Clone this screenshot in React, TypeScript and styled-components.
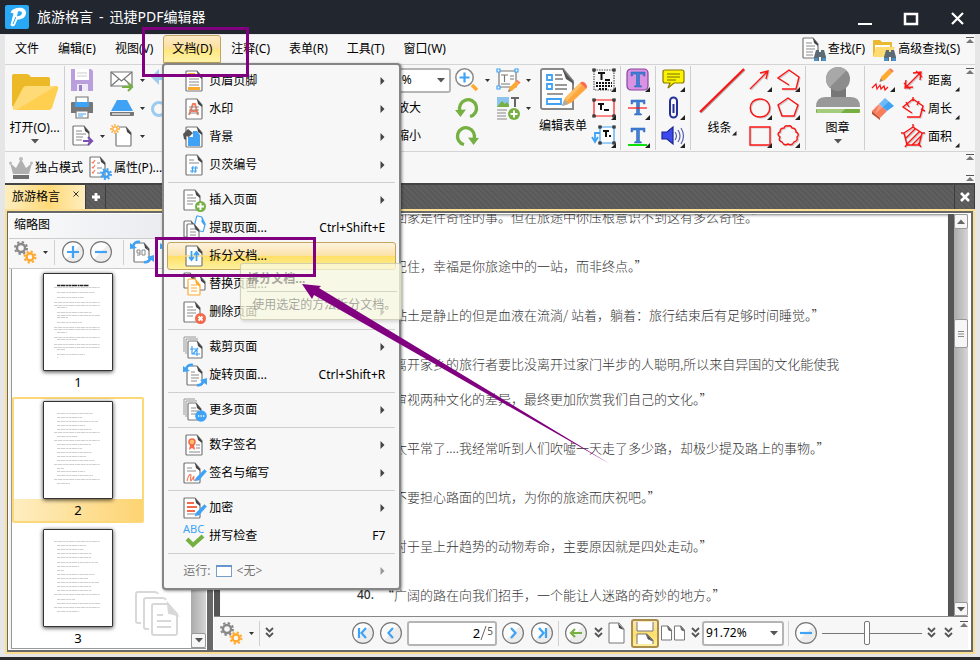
import React from "react";
import styled, { createGlobalStyle, css } from "styled-components";

const ui = `"Noto Sans", "Noto Sans CJK SC", sans-serif`;
const BLUE = "#3fa2f5";
const GREEN = "#76b043";
const GRAY = "#777";
const RED = "#fb1414";
const ORANGE = "#ffa92e";

const Global = createGlobalStyle`
  * { box-sizing: border-box; }
  body { margin: 0; background: #222; font: 12px/16px ${ui}; color: #000; overflow: hidden; }
  button, input, select { font: inherit; color: inherit; }
  button { border: 0; padding: 0; background: none; text-align: left; white-space: nowrap; }
  svg { display: block; flex: none; overflow: visible; }
`;

/* ---------- window frame ---------- */
const Window = styled.div`
  position: relative;
  display: flex;
  flex-direction: column;
  height: 100vh;
  min-height: 480px;
`;
const TitleBar = styled.header`
  display: flex;
  align-items: center;
  gap: 8px;
  height: 34px;
  flex: none;
  padding: 0 15px 0 5px;
  background: #22262f;
  color: #fff;
`;
const Title = styled.h1`
  flex: 1;
  display: flex;
  gap: 6px;
  margin: 0;
  font-size: 14px;
  font-weight: 400;
  line-height: 20px;
`;
const WindowButtons = styled.div`
  display: flex;
  gap: 30px;
  padding-top: 3px;
`;
const Frame = styled.div`
  flex: 1;
  min-height: 0;
  display: flex;
  flex-direction: column;
  padding: 1px 5px 3px;
  background: #e6e6e6;
  border-bottom: 3px solid #2a2a2a;
`;

/* ---------- bars ---------- */
const MenuBar = styled.nav`
  display: flex;
  gap: 1px;
  height: 30px;
  flex: none;
  padding-left: 1px;
  background: #f7f7f7;
  border-bottom: 1px solid #d4d4d4;
`;
const MenuSlot = styled.div`
  position: relative;
  display: flex;
`;
const MenuTab = styled.button<{ $open?: boolean }>`
  height: 28px;
  padding: 0 9px;
  ${(p) =>
    p.$open &&
    css`
      padding: 0 8px;
      border: 1px solid #c3a560;
      border-radius: 3px 3px 0 0;
      background: linear-gradient(#fdebc6, #fbdf9d 48%, #ffe680 52%, #fff3a8);
    `}
`;
const Spacer = styled.div`
  flex: 1;
`;
const SearchButton = styled.button`
  display: flex;
  align-items: center;
  gap: 2px;
  height: 28px;
  margin: 0 1px 0 5px;
`;
const Grips = styled.div`
  display: flex;
  flex-direction: column;
  justify-content: space-between;
  width: 13px;
  padding: 2px 0 2px 4px;
`;
const ModeGrips = styled(Grips)`
  height: 31px;
`;
const Ribbon = styled.div`
  display: flex;
  height: 87px;
  flex: none;
  padding-top: 1px;
  background: #f7f7f7;
  border-bottom: 1px solid #d4d4d4;
`;
const Group = styled.div<{ $line?: boolean; $pad?: number }>`
  display: flex;
  flex: none;
  height: 84px;
  padding-left: ${(p) => p.$pad ?? 5}px;
  border-right: 1px solid ${(p) => (p.$line ? "#cfcfcf" : "transparent")};
`;
const Column = styled.div<{ $w: number }>`
  width: ${(p) => p.$w}px;
  display: grid;
  grid-template-rows: repeat(3, 28px);
  align-items: center;
`;
const IconButton = styled.button`
  display: flex;
  align-items: center;
  gap: 6px;
`;
const LargeButton = styled.button<{ $w: number }>`
  width: ${(p) => p.$w}px;
  display: flex;
  flex-direction: column;
  align-items: center;
  padding-top: 1px;
`;
const LargeLabel = styled.span`
  display: flex;
  align-items: flex-end;
  height: 20px;
  margin: 3px 0;
`;
const ZoomLabel = styled.button`
  padding-left: 30px;
`;
const MeasureButton = styled.button`
  display: flex;
  align-items: flex-end;
  line-height: 22px;
  gap: 3px;
`;
const ModeBar = styled.div`
  display: flex;
  align-items: center;
  gap: 5px;
  height: 31px;
  flex: none;
  padding-left: 4px;
  background: #f7f7f7;
`;
const ModeButton = styled.button`
  display: flex;
  align-items: center;
  gap: 2px;
`;

/* ---------- combo ---------- */
const ComboBox = styled.div<{ $w: number }>`
  position: relative;
  width: ${(p) => p.$w}px;
  height: 25px;
  display: flex;
  align-items: center;
  background: #fff;
  border: 2px solid #b5b5b5;
  border-radius: 3px;
  padding-right: 4px;
`;
const ComboSelect = styled.select`
  flex: 1;
  min-width: 0;
  appearance: none;
  border: 0;
  background: none;
  padding: 0 0 0 2px;
`;

/* ---------- menu ---------- */
const Menu = styled.div`
  position: absolute;
  z-index: 5;
  left: -1px;
  top: 28px;
  width: 239px;
  padding: 2px 3px 3px;
  background: #f7f7f7;
  border: 2px solid #858585;
  border-radius: 4px;
  box-shadow: 1px 1px 3px rgba(0, 0, 0, 0.45);
`;
const MenuItem = styled.button<{ $hot?: boolean; $dim?: boolean }>`
  display: flex;
  align-items: center;
  gap: 2px;
  width: 100%;
  height: 28px;
  padding: 0 10px 0 15px;
  border: 1px solid transparent;
  border-radius: 3px;
  color: ${(p) => (p.$dim ? "#777" : "#000")};
  ${(p) =>
    p.$hot &&
    css`
      border-color: #c3a560;
      background: linear-gradient(#fdf3df, #fbe2a8 48%, #ffe066 52%, #fff1a0);
    `}
`;
const MenuText = styled.span`
  flex: 1;
`;
const MenuRule = styled.hr`
  height: 1px;
  margin: 3px 1px;
  border: 0;
  background: #cfcfcf;
`;
const ItemWrap = styled.div`
  position: relative;
`;
const Tooltip = styled.div`
  position: absolute;
  z-index: 2;
  left: 73px;
  top: 21px;
  width: 162px;
  height: 57px;
  padding: 7px 4px 0 6px;
  border: 1px solid rgba(150, 150, 120, 0.4);
  border-radius: 3px;
  background: rgba(248, 248, 224, 0.75);
  box-shadow: 1px 2px 3px rgba(0, 0, 0, 0.12);
  color: rgba(110, 110, 110, 0.6);
  white-space: nowrap;
`;
const TooltipTitle = styled.div`
  font-weight: 700;
  padding-bottom: 4px;
  border-bottom: 1px solid rgba(150, 150, 130, 0.35);
  margin-bottom: 5px;
`;
const TooltipText = styled.div`
  padding-left: 5px;
`;

/* ---------- tabs & workspace ---------- */
const TabBar = styled.div`
  display: flex;
  align-items: stretch;
  height: 26px;
  flex: none;
  background: #5b5b5b repeating-linear-gradient(45deg, #595959 0 2px, #5f5f5f 2px 4px);
  border-top: 2px solid #444;
`;
const DocTab = styled.div`
  display: flex;
  align-items: center;
  gap: 13px;
  width: 80px;
  padding-left: 7px;
  background: linear-gradient(90deg, #fdeebf, #ffd978 55%, #fdeebf);
`;
const TabTool = styled.button`
  width: 21px;
  display: grid;
  place-items: center;
  border: 0 solid #3c3c3c;
  border-width: 0 1px;
`;
const Workspace = styled.main`
  flex: 1;
  min-height: 0;
  display: flex;
  gap: 6px;
  padding: 2px;
  border: 2px solid #fade91;
  background: #686868;
`;
const Panel = styled.section`
  width: 199px;
  flex: none;
  display: flex;
  flex-direction: column;
  margin-left: -1px;
  border: 1px solid #fff;
  background: #f4f4f4;
`;
const PanelTitle = styled.h2`
  margin: 0;
  height: 24px;
  padding: 3px 5px;
  font-size: 12px;
  line-height: 16px;
  font-weight: 400;
  background: linear-gradient(90deg, #fafafa, #e6e8ee);
`;
const PanelTools = styled.div`
  display: flex;
  align-items: center;
  gap: 6px;
  height: 31px;
  padding: 0 0 3px 4px;
  overflow: hidden;
  background: #f7f7f7;
  border: 1px solid #ccc;
  border-width: 1px 0;
`;
const ThumbZoom = styled.div`
  display: flex;
  gap: 4px;
  margin-right: 4px;
`;
const Bar = styled.span`
  width: 1px;
  height: 25px;
  flex: none;
  background: #d0d0d0;
`;
const ThumbArea = styled.div`
  flex: 1;
  min-height: 0;
  display: flex;
  margin-left: 2px;
  background: #fff;
  border-left: 1px solid #999;
  border-bottom: 1px solid #999;
`;
const ThumbList = styled.div`
  position: relative;
  flex: 1;
  overflow: hidden;
`;
const Thumb = styled.button<{ $on?: boolean }>`
  display: flex;
  flex-direction: column;
  align-items: center;
  width: 132px;
  height: 126px;
  margin-bottom: 2px;
  border: 2px solid ${(p) => (p.$on ? "#fdd878" : "transparent")};
  border-radius: 2px;
  padding-top: 2px;
  background: ${(p) => (p.$on ? "linear-gradient(90deg, #feedc0, #fdd472) bottom / 100% 22px no-repeat" : "none")};
`;
const Sheet = styled.span`
  width: 70px;
  height: 98px;
  border: 1px solid #333;
  border-radius: 1px;
  background: #fff;
  box-shadow: 0 1px 4px rgba(0, 0, 0, 0.75);
`;
const ThumbNumber = styled.span`
  padding-top: 3px;
  font-size: 13px;
  line-height: 17px;
`;
const Watermark = styled.div`
  position: absolute;
  right: 12px;
  bottom: 11px;
`;
const Scroll = styled.div<{ $w: number }>`
  width: ${(p) => p.$w}px;
  display: flex;
  flex-direction: column;
  background: linear-gradient(90deg, #aaa, #d6d6d6);
`;
const ScrollButton = styled.button<{ $h: number }>`
  display: grid;
  place-items: center;
  height: ${(p) => p.$h}px;
  border: 1px solid #999;
  border-radius: 2px;
  background: #f6f6f6;
`;
const ScrollGap = styled.div<{ $grow: number }>`
  flex: ${(p) => p.$grow};
`;

const Viewer = styled.section`
  flex: 1;
  min-width: 0;
  display: flex;
  flex-direction: column;
  border: 1px solid #fff;
  border-right-width: 3px;
`;
const PageRow = styled.div`
  flex: 1;
  min-height: 0;
  display: flex;
  background: #555;
  padding-left: 6px;
`;
const Page = styled.article`
  flex: 1;
  overflow: hidden;
  display: flex;
  flex-direction: column;
  justify-content: flex-end;
  margin-right: 6px;
  padding: 0 0 4px 137px;
  background: #fff;
  box-shadow: inset 0 3px 3px -2px #777;
`;
const Quotes = styled.ol`
  margin: 0;
  padding: 0;
  list-style: none;
`;
const Quote = styled.li`
  display: flex;
  margin-top: 14px;
  font: 300 13px/35px "Noto Sans CJK SC", sans-serif;
  color: #333;
  white-space: nowrap;
`;
const QuoteNumber = styled.span`
  width: 24px;
  font: 500 12px/35px ${ui};
`;
const StatusBar = styled.footer`
  display: flex;
  align-items: center;
  height: 33px;
  flex: none;
  padding-left: 5px;
  background: #f7f7f7;
  border-top: 1px solid #888;
`;
const StatusCell = styled.div<{ $w: number; $end?: boolean; $indent?: boolean }>`
  width: ${(p) => p.$w}px;
  flex: none;
  display: flex;
  align-items: center;
  gap: 6px;
  padding-left: ${(p) => (p.$indent ? 5 : 0)}px;
  justify-content: ${(p) => (p.$end ? "flex-end" : "flex-start")};
`;
const SliderEnd = styled.div`
  display: flex;
  flex: 1;
  justify-content: space-between;
  padding: 0 7px 0 5px;
`;
const StatusGrip = styled.span`
  padding-bottom: 18px;
`;
const PageField = styled.label`
  display: flex;
  align-items: center;
  width: 90px;
  height: 25px;
  padding-right: 2px;
  background: #fff;
  border: 2px solid #b5b5b5;
  border-radius: 3px;
`;
const PageInput = styled.input`
  flex: 1;
  min-width: 0;
  padding: 0;
  border: 0;
  background: none;
  font-size: 13px;
  text-align: right;
  outline: 0;
`;
const PageTotal = styled.span`
  font-size: 10px;
  line-height: 12px;
  padding-bottom: 4px;
  color: #555;
`;
const Toggle = styled.button`
  width: 28px;
  height: 29px;
  display: grid;
  place-items: center;
  border: 2px solid #a98e4c;
  border-radius: 3px;
  background: linear-gradient(#fbe6b8, #ffdf6a 55%, #fff0a0);
`;
const Slider = styled.input`
  appearance: none;
  width: 100px;
  height: 24px;
  margin: 0;
  background: linear-gradient(#777, #777) center / 100% 1px no-repeat;
  &::-webkit-slider-thumb {
    appearance: none;
    width: 6px;
    height: 24px;
    border: 1px solid #777;
    border-radius: 2px;
    background: #fff;
  }
`;

/* ---------- callouts ---------- */
const Callout = styled.div<{ $x: number; $y: number; $w: number; $h: number }>`
  position: absolute;
  z-index: 10;
  left: ${(p) => p.$x}px;
  top: ${(p) => p.$y}px;
  width: ${(p) => p.$w}px;
  height: ${(p) => p.$h}px;
  border: 3px solid #800080;
  pointer-events: none;
`;
const Pointer = styled.svg`
  position: absolute;
  z-index: 10;
  left: 302px;
  top: 284px;
  pointer-events: none;
`;

/* ---------- icons ---------- */
type Kids = { children?: React.ReactNode; s?: number };
const I = ({ children, s = 24 }: Kids) => (
  <svg width={s} height={s} viewBox="0 0 24 24" fill="none" strokeWidth="1.2" aria-hidden="true">
    {children}
  </svg>
);
const Doc = ({ x = 3, y = 2, w = 16, h = 20, c = GRAY, fill = "#fff" }) => (
  <g>
    <path d={`M${x + 1} ${y}H${x + w - 5}L${x + w} ${y + 6}V${y + h - 1}q0 1 -1 1H${x + 1}q-1 0 -1 -1V${y + 1}q0 -1 1 -1Z`} fill={fill} stroke={c} />
    <path d={`M${x + w - 5} ${y}L${x + w} ${y + 6}V${y + 8}L${x + w - 4} ${y + 5}Z`} fill={c === GRAY ? "#444" : c} />
  </g>
);
const Lines = ({ d, c = "#8a8a8a" }: { d: string; c?: string }) => <path d={d} stroke={c} strokeWidth="1" />;
const Corner = () => <path d="M24 19V24H19Z" fill="#222" />;
const Down = () => (
  <svg width="8" height="5" viewBox="0 0 8 5" aria-hidden="true">
    <path d="M0 0H8L4 4.5Z" fill="#555" />
  </svg>
);
const SmallDown = () => (
  <svg width="5" height="3" viewBox="0 0 5 3" aria-hidden="true">
    <path d="M0 0H5L2.5 3Z" fill="#333" />
  </svg>
);
const Up = () => (
  <svg width="8" height="5" viewBox="0 0 8 5" aria-hidden="true">
    <path d="M0 5H8L4 0.5Z" fill="#666" />
  </svg>
);
const Grip = () => (
  <svg width="8" height="6" viewBox="0 0 8 6" aria-hidden="true">
    <path d="M0 0.5H8" stroke="#555" />
    <path d="M0 6H8L4 2Z" fill="#777" />
  </svg>
);
const CornerMark = () => (
  <svg width="5" height="5" viewBox="0 0 5 5" aria-hidden="true">
    <path d="M4.500 0V4.500H0Z" fill="#222" />
  </svg>
);
const Chevrons = () => (
  <svg width="9" height="12" viewBox="0 0 9 12" fill="none" stroke="#555" strokeWidth="1.8" aria-hidden="true">
    <path d="M1 1L4.500 4.500L8 1M1 6L4.500 9.500L8 6" />
  </svg>
);
const Sub = ({ dim }: { dim?: boolean }) => (
  <svg width="5" height="8" viewBox="0 0 5 8" aria-hidden="true">
    <path d="M0.500 0V8L4.500 4Z" fill={dim ? "#999" : "#444"} />
  </svg>
);
const gear = (cx: number, cy: number, r: number) => (
  <g>
    <circle cx={cx} cy={cy} r={r} strokeWidth="2.4" />
    <circle cx={cx} cy={cy} r={r + 2} strokeWidth="2" strokeDasharray={`${((r + 2) * Math.PI) / 8} ${((r + 2) * Math.PI) / 8}`} />
  </g>
);
const Gears = () => (
  <I>
    <g stroke="#888">{gear(8, 8, 4)}</g>
    <g stroke={ORANGE}>{gear(17, 17, 3.5)}</g>
  </I>
);
const Round = ({ d, c = BLUE }: { d: string; c?: string }) => (
  <I>
    <circle cx="12" cy="12" r="10.400" fill="#fdfdfd" />
    <path d="M4.600 19.400L19.400 4.600A10.400 10.400 0 0 1 4.600 19.400Z" fill="#ececec" />
    <circle cx="12" cy="12" r="10.400" stroke={GRAY} strokeWidth="1.200" />
    <path d={d} stroke={c} strokeWidth="2.2" />
  </I>
);
const Logo = () => (
  <svg width="24" height="24" viewBox="0 0 24 24" aria-hidden="true">
    <rect width="24" height="24" rx="2" fill="#28a8f5" />
    <path d="M9 4C15 1.500 21.500 3 21 8.500C20.500 12.500 16.500 14.800 12.500 14.500L10 20C8.500 22 6.500 21.500 5.500 20L8.500 8.500L5.500 7.500C6.500 5.500 7.500 4.700 9 4Z" fill="#fff" />
    <path d="M13 6.500C16 5.700 17.500 7 16.700 9C16 10.700 14 11.300 12 11.200Z" fill="#28a8f5" />
    <path d="M10.800 12L8 19" stroke="#28a8f5" />
  </svg>
);
const Pencil = ({ x = 10, y = 10 }) => (
  <g transform={`translate(${x} ${y})`}>
    <path d="M0 12L1.500 7.500L8 1L11 4L4.500 10.500Z" fill={ORANGE} />
    <path d="M0 12L1 9L3 11Z" fill="#888" />
    <path d="M8 1L9.500 0L12.500 2.500L11 4Z" fill="#f77c5a" />
  </g>
);
const Pen = () => <path d="M13 17L21.500 8.500L23.500 10.500L16 19L12 20Z" fill={BLUE} stroke={BLUE} strokeWidth=".5" />;
const Binoculars = () => (
  <g fill="#5c6a75">
    <path d="M14 13h3v2h2v-2h3l2 7v4h-5v-4h-2v4h-5v-4Z" />
    <path d="M12 21h4v3h-4ZM20 21h4v3h-4Z" fill="#4a90c8" />
  </g>
);
const SearchDoc = () => (
  <I>
    <Doc x={1} y={1} w={15} h={20} />
    <Lines d="M4 6h6M4 9h9M4 12h9M4 15h7M4 18h7" />
    <Binoculars />
  </I>
);
const SearchFolder = () => (
  <I>
    <path d="M1 4q0-1 1-1h6l2 2h10v14H1Z" fill="#e8b931" />
    <path d="M3 8h15v10H3Z" fill="#fff" />
    <path d="M4 10H23L19 20H1Z" fill="#ffdc73" />
    <Binoculars />
  </I>
);
const Folder = () => (
  <svg width="48" height="46" viewBox="0 0 48 46" aria-hidden="true">
    <path d="M1 9q0-2 2-2h13q2 0 4 3h17q2 0 2 2v28H3q-2 0-2-2Z" fill="#ecba28" />
    <path d="M12 21q1-2 3-2H45q3 0 2 3L41 41q-1 2-3 2H4q-3 0-2-3Z" fill="#ffd04f" />
    <path d="M12 21q1-2 3-2H45L5 43H4q-3 0-2-3Z" fill="#ffe08a" opacity=".7" />
  </svg>
);
const Save = () => (
  <I>
    <path d="M1 1H21L23 3V23H1Z" fill="#b9a0dc" />
    <path d="M5 1H19V12H5Z" fill="#fff" />
    <path d="M7 5h10M7 8h10" stroke="#ccc" />
    <path d="M7 16H18V23H7Z" fill="#efeaf7" />
    <path d="M9 17h3v6h-3Z" fill="#9a7ec8" />
  </I>
);
const Printer = () => (
  <I>
    <path d="M6 1H18V7H6Z" fill="#fff" stroke={GRAY} />
    <path d="M2 6H22q1 0 1 1V17H1V7q0-1 1-1Z" fill="#777" />
    <path d="M5 6H19V11H5Z" fill={BLUE} />
    <path d="M6 15H18V22H6Z" fill="#fff" stroke={GRAY} />
    <path d="M8 18h8M8 20h5" stroke={BLUE} />
  </I>
);
const Export = () => (
  <I>
    <Doc x={3} y={2} w={16} h={19} />
    <Lines d="M6 7h6M6 10h10M6 13h7M6 16h6" />
    <path d="M13 17h8M18 13l4 4l-4 4" stroke="#7b4fb5" strokeWidth="2.2" />
  </I>
);
const Mail = () => (
  <I>
    <path d="M1 4H22V18H1Z" fill="#fff" stroke={GRAY} />
    <path d="M1 4L11.500 13L22 4M1 18L9 11M22 18L14 11" stroke={GRAY} />
    <path d="M12 19h9M18 15l4 4l-4 4" stroke={GREEN} strokeWidth="2.200" />
  </I>
);
const Scanner = () => (
  <I>
    <path d="M7 4H17L23 15H1Z" fill={BLUE} />
    <path d="M0 16H24V19q0 1-1 1H1q-1 0-1-1Z" fill="#777" />
    <path d="M2 18H20" stroke="#fff" />
  </I>
);
const NewDoc = () => (
  <I>
    <Doc x={6} y={3} w={15} h={19} />
    <circle cx="5" cy="5" r="4" fill="#f7f7f7" />
    <path d="M5 0V10M0 5H10M1.500 1.500L8.500 8.500M8.500 1.500L1.500 8.500" stroke={ORANGE} strokeWidth="1.300" />
    <circle cx="5" cy="5" r="1.500" fill="#fff" />
  </I>
);
const Undo = () => (
  <I>
    <path d="M0 9L8 1V6H14V12H8V17Z" fill="#9ccbf0" />
  </I>
);
const Ring = () => (
  <I>
    <circle cx="8" cy="13" r="6.500" stroke="#9ccbf0" strokeWidth="3" />
  </I>
);
const ZoomIn = () => (
  <I>
    <path d="M17 17L22 22" stroke={ORANGE} strokeWidth="3.500" />
    <circle cx="9.500" cy="9.500" r="8.700" fill="#fff" stroke="#888" strokeWidth="1.500" />
    <path d="M9.500 4.500V14.500M4.500 9.500H14.500" stroke={BLUE} strokeWidth="2.200" />
  </I>
);
const Rotate = ({ flip }: { flip?: boolean }) => (
  <I>
    <g transform={flip ? "translate(24 0) scale(-1 1)" : undefined}>
      <path d="M5 15A8.500 8.500 0 1 1 15 20.500" stroke={GREEN} strokeWidth="3.300" />
      <path d="M0 14L11 13.500L5.500 21Z" fill={GREEN} />
    </g>
  </I>
);
const EditText = () => (
  <I>
    <path d="M3 3H20V19H3Z" fill="#fff" stroke={GRAY} />
    <path d="M5 7h7M8.500 7v7M14 8h4M14 11h4M5 16h9" stroke={GRAY} />
    <path d="M1 1h3v3H1ZM19 1h3v3h-3ZM1 18h3v3H1Z" fill="#fff" stroke={BLUE} />
    <Pencil x={12} y={12} />
  </I>
);
const InsertPic = () => (
  <I>
    <path d="M1 1H13V11H1Z" fill="#8cc4ee" />
    <path d="M1 11L6 5L9 8L11 6L13 9V11Z" fill={GREEN} />
    <path d="M15 2H23M19 2V11" stroke="#666" strokeWidth="2" />
    <path d="M1 14h10M1 17h9M1 20h9M1 23h10" stroke="#888" />
    <circle cx="18" cy="18" r="6" fill={GREEN} />
    <path d="M18 14.500v7M14.500 18h7" stroke="#fff" strokeWidth="2" />
  </I>
);
const EditForm = () => (
  <svg width="48" height="44" viewBox="0 0 48 44" fill="none" aria-hidden="true">
    <path d="M4 2H24L34 14V42H4q-2 0-2-2V4q0-2 2-2Z" fill="#fff" stroke="#888" strokeWidth="2" />
    <path d="M24 1Q24 7 28 9Q34 12 35 18L25 6Z" fill="#555" />
    <path d="M23 1L35 17L27 12Z" fill="#555" />
    <path d="M8 8h5v5H8ZM8 17h5v5H8ZM8 32h14v5H8Z" stroke={BLUE} strokeWidth="1.800" />
    <path d="M16 8h7M16 12h8M16 18h12M16 22h12M8 27h16" stroke="#999" strokeWidth="1.800" />
    <path d="M23 39L26 31L41 16L47 22L32 36Z" fill="#ffa73c" />
    <path d="M26 31L41 16L43 18L28 34Z" fill="#ffbf66" />
    <path d="M23 39L25 33L30 37Z" fill="#aaa" />
    <path d="M41 16Q44 13 47 17Q49 20 47 22Z" fill="#fb6c4b" />
  </svg>
);
const TypeWriter = () => (
  <I>
    <path d="M2 2H22V22H2Z" stroke="#555" strokeDasharray="1.500 1" />
    <path d="M1 1h2v2H1ZM21 1h2v2h-2Z" fill="#fff" stroke="#111" />
    <path d="M6 5H13M9.500 5V12M13 12H18" stroke="#111" strokeWidth="2" />
    <path d="M4 15H20M4 18H20M7 21H16" stroke="#111" strokeWidth="2" strokeDasharray="2 1" />
    <Corner />
  </I>
);
const TextBox = () => (
  <I>
    <path d="M2 4H22V20H2Z" fill="#fff" stroke={RED} />
    <path d="M1 3h2v2H1ZM21 3h2v2h-2ZM1 19h2v2H1ZM21 19h2v2h-2Z" fill="#fff" stroke="#111" />
    <path d="M6 8H12M9 8V14M12 14H17" stroke="#111" strokeWidth="2" />
    <Corner />
  </I>
);
const CallText = () => (
  <I>
    <path d="M8 3H22V19H8Z" fill="#fff" stroke={BLUE} />
    <path d="M8 9H3V17M0 13L3 18L6 13" stroke={BLUE} strokeWidth="1.800" />
    <path d="M7 2h2v2H7ZM21 2h2v2h-2ZM7 18h2v2H7ZM21 18h2v2h-2Z" fill="#fff" stroke="#111" />
    <path d="M11 7H17M14 7V13M17 12H19" stroke="#111" strokeWidth="2" />
    <Corner />
  </I>
);
const BlueT = ({ kind }: { kind: "box" | "strike" | "under" }) => (
  <I>
    {kind === "box" && <rect x="1" y="1" width="21" height="21" rx="4" fill="#d993e2" stroke="#8a45a0" />}
    <path d="M5 4H19V8H17.500L17 6H13.500V17L15.500 18V19H8.500V18L10.500 17V6H7L6.500 8H5Z" fill="#3f7fd6" stroke="#2a62b0" strokeWidth=".5" />
    {kind === "strike" && <path d="M2 12H21" stroke={RED} strokeWidth="1.200" />}
    {kind === "under" && <path d="M2 21H21" stroke="#0be00b" strokeWidth="2" />}
    <Corner />
  </I>
);
const Note = () => (
  <I>
    <path d="M4 2H21q2 0 2 2V13q0 2-2 2H13L7 20L9 15H4q-2 0-2-2V4q0-2 2-2Z" fill="#fbf300" stroke="#8a7a00" />
    <path d="M6 6h13M6 9h13M6 12h9" stroke="#777000" />
    <Corner />
  </I>
);
const Clip = () => (
  <I>
    <path d="M9 8V18a3.500 3.500 0 0 0 7 0V5a3.500 3.500 0 0 0-7 0V16M12.500 8V17" stroke="#24309a" strokeWidth="2" />
    <Corner />
  </I>
);
const Speaker = () => (
  <I>
    <path d="M1 8H6L12 3V20L6 15H1Z" fill="#3c49ee" stroke="#1c2590" />
    <path d="M14 8q3 4 0 8M17 6q4 6 0 12M20 4q5 8 0 16" stroke="#5560b0" />
    <Corner />
  </I>
);
const Stroke = ({ d, mark = true }: { d: string; mark?: boolean }) => (
  <I>
    <path d={d} stroke="#999" opacity=".5" transform="translate(1 1)" />
    <path d={d} stroke={RED} strokeWidth="1.400" />
    {mark && <Corner />}
  </I>
);
const BigLine = () => (
  <svg width="48" height="46" viewBox="0 0 48 46" aria-hidden="true">
    <path d="M3 46L47 3" stroke="#aaa" strokeWidth="1.500" />
    <path d="M2 45L46 2" stroke={RED} strokeWidth="2.200" />
  </svg>
);
const Stamp = () => (
  <svg width="46" height="46" viewBox="0 0 46 46" aria-hidden="true">
    <path d="M16 20H31V32H16Z" fill="#777" />
    <circle cx="23" cy="12" r="12" fill="#8c8c8c" />
    <path d="M14.500 20.500A12 12 0 0 1 31.500 3.500Z" fill="#a8a8a8" />
    <path d="M1 40q0-10 9-10H36q9 0 9 10Z" fill="#999" />
    <rect x="1" y="42" width="44" height="4" rx="1" fill={GREEN} />
    <path d="M2 42H30L26 46H2Z" fill="#a4cc7c" />
  </svg>
);
const RedPencil = () => (
  <I>
    <g transform="translate(-3 -1) scale(1.150)"><Pencil x={10} y={1} /></g>
    <path d="M1 20L5 16L6 21L9 17L10 21L13 18L14 22L17 19" stroke={RED} />
    <Corner />
  </I>
);
const Eraser = () => (
  <I>
    <path d="M1 15L8 8L16 15L9 22Z" fill="#f77c5a" />
    <path d="M8 8L14 2L23 10L16 15Z" fill={BLUE} />
    <path d="M1 15L9 22V24L1 18Z" fill="#c05030" />
    <path d="M8 8L14 2L18 5.500L4 18Z" fill="#fff" opacity=".25" />
  </I>
);
const Crown = () => (
  <I>
    <path d="M1 7L7 12L12 3L17 12L23 7L20 18H4Z" fill="#b0b0b0" />
    <path d="M4 19H20V23H4Z" fill="#707070" />
    <circle cx="12" cy="3" r="2" fill="#bbb" />
    <circle cx="1.500" cy="7" r="1.500" fill="#bbb" />
    <circle cx="22.500" cy="7" r="1.500" fill="#bbb" />
  </I>
);
const Props = () => (
  <I>
    <Doc x={2} y={1} w={15} h={20} />
    <path d="M4 6l1 1l2-3M4 11l1 1l2-3M4 16l1 1l2-3" stroke="#f77c5a" />
    <Lines d="M9 7h3M9 12h5M9 17h3" />
    <g stroke={BLUE}>{gear(18, 18, 3)}</g>
  </I>
);
const Turn = ({ text }: { text?: boolean }) => (
  <I>
    <Doc x={4} y={3} w={15} h={19} c={GRAY} />
    {text ? (
      <path d="M7 10h3v5H7M7 10v3h3M12 10h3v5h-3ZM17 9h1" stroke="#888" strokeWidth="1" />
    ) : (
      <Lines d="M8 9h4M8 12h8M8 15h8M8 18h6" />
    )}
    <path d="M10 2Q5 1 3 6" stroke={BLUE} strokeWidth="2.500" />
    <path d="M0 3L7 8L0 9Z" fill={BLUE} />
    <path d="M14 22Q18 23 21 18" stroke={BLUE} strokeWidth="2.500" />
    <path d="M24 15V22L17 17Z" fill={BLUE} />
  </I>
);

const STACK = "#999";
const menuIcons: Record<string, React.ReactNode> = {
  header: <I><Doc /><path d="M5 4H12V7H5ZM5 18H17V21H5Z" fill={ORANGE} /><Lines d="M6 10h10M6 13h10M6 16h10" /></I>,
  water: <I><Doc /><path d="M6 18L10 7H12L15 18M8 14H14" stroke="#f77c5a" strokeWidth="2" /><Lines d="M6 10h10M6 13h10M6 16h10" /></I>,
  back: <I><Doc /><path d="M5 12H10V6H14L17 10V21H5Z" fill={BLUE} /><path d="M0 9L5 4L10 8L6 12L3 11V15L1 14Z" fill="#555" /></I>,
  bates: <I><Doc /><Lines d="M6 7h5M6 10h10" /><path d="M10 13L9 20M13 13L12 20M8 15h7M7 18h7" stroke={BLUE} /></I>,
  insert: <I><Doc x={1} /><Lines d="M4 7h6M4 10h9M4 13h9M4 16h6" /><circle cx="17.500" cy="18.500" r="5.500" fill={GREEN} /><path d="M17.500 15v7M14 18.500h7" stroke="#fff" strokeWidth="2" /></I>,
  extract: <I><g transform="rotate(14 18 8)"><Doc x={12} y={1} w={10} h={14} c={BLUE} /></g><Doc x={1} y={5} w={12} h={16} /><Doc x={4} y={8} w={12} h={15} /><Lines d="M7 13h6M7 16h6M7 19h6" /></I>,
  split: <I><Doc y={2} /><path d="M1 12H22" stroke="#fbdc80" strokeWidth="1.500" /><path d="M8.500 7V16M6 13l2.500 3L11 13M13.500 17V8M11 11l2.500-3L16 11" stroke={BLUE} strokeWidth="1.800" /></I>,
  replace: <I><Doc x={1} y={1} w={11} h={15} /><Doc x={12} y={4} w={10} h={14} /><Doc x={5} y={7} w={12} h={16} c={ORANGE} /><Lines d="M8 13h6M8 16h6M8 19h6" c={ORANGE} /></I>,
  remove: <I><Doc x={1} /><Lines d="M4 7h6M4 10h9M4 13h9M4 16h6" /><circle cx="17.500" cy="18.500" r="5.500" fill="#f4694a" /><path d="M15.500 16.500l4 4M19.500 16.500l-4 4" stroke="#fff" strokeWidth="2" /></I>,
  crop: <I><path d="M1 17V2H13M3 19V4H15" stroke={STACK} strokeWidth="1" /><Doc x={5} y={6} w={14} h={17} /><path d="M9 11V19H17M7 14H14V21M10 19L15 13" stroke={BLUE} /></I>,
  rotate: <Turn />,
  more: <I><path d="M1 17V1H12M3 19V3H14" stroke={STACK} strokeWidth="1" /><Doc x={5} y={5} w={13} h={17} /><Lines d="M8 10h5M8 13h8M8 16h5" /><circle cx="18" cy="18" r="5.800" fill={BLUE} /><path d="M15 18h6.500" stroke="#fff" strokeWidth="1.500" strokeDasharray="1.300 1.200" /></I>,
  sign: <I><Doc /><path d="M7 12L6 17L9 15L12 17L11 12" fill="#f4694a" /><circle cx="9" cy="9" r="3" fill="#fbc070" stroke="#f4694a" strokeWidth="1.500" /><Lines d="M13 12h4M13 15h4M6 19h11" /></I>,
  initials: <I><Doc x={1} /><Lines d="M4 7h5M4 10h9" /><path d="M4 20Q6 12 8 14Q7 20 8 20L11 15Q10 20 12 19" stroke="#f77c5a" /><Pen /></I>,
  redact: <I><Doc x={1} /><path d="M4 7h7M4 11h10M4 15h8" stroke="#f4694a" strokeWidth="2" /><Lines d="M4 18h9" /><Pen /></I>,
  spell: (
    <svg width="24" height="26" viewBox="0 0 24 26" fill="none" aria-hidden="true">
      <text x="0" y="10" fontSize="11" fill={BLUE} fontFamily="Noto Sans">ABC</text>
      <path d="M4 16L10 22L20 13" stroke={GREEN} strokeWidth="4" />
    </svg>
  ),
};

type Item = { id: string; icon?: string; text?: string; key?: string; sub?: boolean; rule?: boolean; hot?: boolean };
const items: Item[] = [
  { id: "1", icon: "header", text: "页眉页脚", sub: true },
  { id: "2", icon: "water", text: "水印", sub: true },
  { id: "3", icon: "back", text: "背景", sub: true },
  { id: "4", icon: "bates", text: "贝茨编号", sub: true },
  { id: "r1", rule: true },
  { id: "5", icon: "insert", text: "插入页面", sub: true },
  { id: "6", icon: "extract", text: "提取页面...", key: "Ctrl+Shift+E" },
  { id: "7", icon: "split", text: "拆分文档...", hot: true },
  { id: "8", icon: "replace", text: "替换页面..." },
  { id: "9", icon: "remove", text: "删除页面", sub: true },
  { id: "r2", rule: true },
  { id: "10", icon: "crop", text: "裁剪页面", sub: true },
  { id: "11", icon: "rotate", text: "旋转页面...", key: "Ctrl+Shift+R" },
  { id: "r3", rule: true },
  { id: "12", icon: "more", text: "更多页面", sub: true },
  { id: "r4", rule: true },
  { id: "13", icon: "sign", text: "数字签名", sub: true },
  { id: "14", icon: "initials", text: "签名与缩写", sub: true },
  { id: "r5", rule: true },
  { id: "15", icon: "redact", text: "加密", sub: true },
  { id: "16", icon: "spell", text: "拼写检查", key: "F7" },
  { id: "r6", rule: true },
];

const DocumentMenu = () => (
  <Menu role="menu">
    {items.map((m) =>
      m.rule ? (
        <MenuRule key={m.id} />
      ) : (
        <ItemWrap key={m.id}>
          <MenuItem role="menuitem" $hot={m.hot}>
            {menuIcons[m.icon!]}
            <MenuText>{m.text}</MenuText>
            {m.key && <span>{m.key}</span>}
            {m.sub && <Sub />}
          </MenuItem>
          {m.hot && (
            <Tooltip role="tooltip">
              <TooltipTitle>拆分文档...</TooltipTitle>
              <TooltipText>使用选定的方法拆分文档。</TooltipText>
            </Tooltip>
          )}
        </ItemWrap>
      )
    )}
    <MenuItem role="menuitem" $dim>
      <span>运行:</span>
      <svg width="22" height="16" viewBox="0 0 22 16" aria-hidden="true">
        <rect x="3.500" y="2.500" width="15" height="11" fill="#fff" stroke="#7a9cc8" />
        <path d="M3 3H19" stroke="#6a94cc" strokeWidth="2" />
      </svg>
      <MenuText>&lt;无&gt;</MenuText>
      <Sub dim />
    </MenuItem>
  </Menu>
);

const Tool = ({ label, icon, arrow }: { label: string; icon: React.ReactNode; arrow?: boolean }) => (
  <IconButton aria-label={label}>
    {icon}
    {arrow && <SmallDown />}
  </IconButton>
);

const Combo = ({ w, label }: { w: number; label: string }) => (
  <ComboBox $w={w}>
    <ComboSelect aria-label={label} defaultValue="91.72%">
      <option>91.72%</option>
      <option>100%</option>
    </ComboSelect>
    <Down />
  </ComboBox>
);

const textRuns = [
  [46, 66, 0, 54, 0, 38, 0, 66, 66, 14, 0, 50, 62, 16, 0, 36, 0, 66, 66, 14, 0, 66, 28, 0, 66, 66, 12, 0, 40, 2],
  [52, 36, 58, 40, 50, 66, 30, 66, 48, 36, 50, 42, 54, 66, 10, 40, 52, 66, 18],
  [66, 42, 38, 50, 48, 58, 32, 10, 54, 44, 60, 48, 50, 66, 26, 62, 66, 32],
];
const ThumbText = ({ n }: { n: number }) => {
  const runs = textRuns[n];
  const step = 74 / runs.length;
  return (
    <svg width="68" height="96" viewBox="0 0 68 96" aria-hidden="true">
      {runs.map((w, i) =>
        w ? (
          <path
            key={i}
            d={`M${w > 64 ? 10 : 13} ${Math.round(11 + i * step) + 0.5}h${Math.round(w * 0.7)}`}
            stroke={n === 0 && i === 0 ? "#222" : "#c4c4c4"}
            strokeWidth={n === 0 && i === 0 ? 1.3 : 0.8}
            strokeDasharray="3 .5 5 .6 2 .4"
          />
        ) : null
      )}
    </svg>
  );
};

const quotes: [string, string, string?][] = [
  ["33.", "“回家是件奇怪的事。但在旅途中你压根意识不到这有多么奇怪。”"],
  ["34.", "“记住，幸福是你旅途中的一站，而非终点。”"],
  ["35.", "“粘土是静止的但是血液在流淌/ 站着，躺着：旅行结束后有足够时间睡觉。”"],
  ["36.", "“离开家乡的旅行者要比没离开过家门半步的人聪明,所以来自异国的文化能使我", "们审视两种文化的差异，最终更加欣赏我们自己的文化。”"],
  ["37.", "“太平常了....我经常听到人们吹嘘一天走了多少路，却极少提及路上的事物。”"],
  ["38.", "“不要担心路面的凹坑，为你的旅途而庆祝吧。”"],
  ["39.", "“对于呈上升趋势的动物寿命，主要原因就是四处走动。”"],
  ["40.", "“广阔的路在向我们招手，一个能让人迷路的奇妙的地方。”"],
];

export default function App() {
  return (
    <Window>
      <Global />
      <TitleBar>
        <Logo />
        <Title><span>旅游格言</span><span>-</span><span>迅捷PDF编辑器</span></Title>
        <WindowButtons>
          <button aria-label="最小化">
            <svg width="16" height="16" viewBox="0 0 16 16"><path d="M1 13H15" stroke="#fff" strokeWidth="2" /></svg>
          </button>
          <button aria-label="最大化">
            <svg width="16" height="16" viewBox="0 0 16 16"><path d="M2 3H14V13H2Z" fill="none" stroke="#fff" strokeWidth="2.500" /></svg>
          </button>
          <button aria-label="关闭">
            <svg width="16" height="16" viewBox="0 0 16 16"><path d="M3 2L14 13M14 2L3 13" stroke="#fff" strokeWidth="2.200" /></svg>
          </button>
        </WindowButtons>
      </TitleBar>
      <Frame>
        <MenuBar>
          <MenuTab>文件</MenuTab>
          <MenuTab>编辑(E)</MenuTab>
          <MenuTab>视图(V)</MenuTab>
          <MenuSlot>
            <MenuTab $open aria-haspopup="menu" aria-expanded="true">文档(D)</MenuTab>
            <DocumentMenu />
          </MenuSlot>
          <MenuTab>注释(C)</MenuTab>
          <MenuTab>表单(R)</MenuTab>
          <MenuTab>工具(T)</MenuTab>
          <MenuTab>窗口(W)</MenuTab>
          <Spacer />
          <SearchButton><SearchDoc />查找(F)</SearchButton>
          <SearchButton><SearchFolder />高级查找(S)</SearchButton>
          <Grips><Grip /></Grips>
        </MenuBar>

        <Ribbon>
          <Group $line $pad={0}>
            <LargeButton $w={59}><Folder /><LargeLabel>打开(O)...</LargeLabel><Down /></LargeButton>
          </Group>
          <Group>
            <Column $w={40}>
              <Tool label="保存" icon={<Save />} />
              <Tool label="打印" icon={<Printer />} />
              <Tool label="导出" icon={<Export />} arrow />
            </Column>
            <Column $w={41}>
              <Tool label="邮件" icon={<Mail />} arrow />
              <Tool label="扫描" icon={<Scanner />} arrow />
              <Tool label="新建" icon={<NewDoc />} arrow />
            </Column>
            <Column $w={216}>
              <Tool label="撤消" icon={<Undo />} />
              <Tool label="重做" icon={<Ring />} />
            </Column>
            <Column $w={88}>
              <Combo w={84} label="缩放" />
              <ZoomLabel>放大</ZoomLabel>
              <ZoomLabel>缩小</ZoomLabel>
            </Column>
            <Column $w={41}>
              <Tool label="缩放工具" icon={<ZoomIn />} arrow />
              <Tool label="逆时针旋转" icon={<Rotate />} />
              <Tool label="顺时针旋转" icon={<Rotate flip />} />
            </Column>
            <Column $w={42}>
              <Tool label="编辑内容" icon={<EditText />} arrow />
              <Tool label="添加图像" icon={<InsertPic />} arrow />
            </Column>
            <LargeButton $w={50}><EditForm /><LargeLabel>编辑表单</LargeLabel></LargeButton>
          </Group>
          <Group $line $pad={3}>
            <Column $w={28}>
              <Tool label="打字机" icon={<TypeWriter />} />
              <Tool label="文本框" icon={<TextBox />} />
              <Tool label="标注" icon={<CallText />} />
            </Column>
          </Group>
          <Group $line>
            <Column $w={29}>
              <Tool label="高亮" icon={<BlueT kind="box" />} />
              <Tool label="删除线" icon={<BlueT kind="strike" />} />
              <Tool label="下划线" icon={<BlueT kind="under" />} />
            </Column>
          </Group>
          <Group $line>
            <Column $w={29}>
              <Tool label="便签" icon={<Note />} />
              <Tool label="附件" icon={<Clip />} />
              <Tool label="声音" icon={<Speaker />} />
            </Column>
          </Group>
          <Group $line>
            <LargeButton $w={52}>
              <BigLine />
              <LargeLabel>线条<CornerMark /></LargeLabel>
            </LargeButton>
            <Column $w={28}>
              <Tool label="箭头" icon={<Stroke d="M2 21L20 3M12 5L20 3L18 11" />} />
              <Tool label="椭圆" icon={<Stroke d="M12 3C25 3 25 21 12 21S-1 3 12 3Z" />} />
              <Tool label="矩形" icon={<Stroke d="M2 3H22V21H2Z" />} />
            </Column>
            <Column $w={29}>
              <Tool label="折线" icon={<Stroke d="M13 17L2 10L13 2L23 9L20 21H6" />} />
              <Tool label="多边形" icon={<Stroke d="M12 2L22 9L18 20H6L2 9Z" />} />
              <Tool label="云形" icon={<Stroke d="M12 2Q15 1 16 4Q20 4 20 8Q24 10 21 13Q22 17 18 18Q16 22 12 20Q8 22 6 18Q2 17 4 13Q0 10 4 8Q4 4 8 4Q9 1 12 2Z" />} />
            </Column>
          </Group>
          <Group $line>
            <LargeButton $w={53}><Stamp /><LargeLabel>图章</LargeLabel><Down /></LargeButton>
          </Group>
          <Group $pad={6}>
            <Column $w={30}>
              <Tool label="铅笔" icon={<RedPencil />} />
              <Tool label="橡皮擦" icon={<Eraser />} />
            </Column>
            <Column $w={56}>
              <MeasureButton><Stroke mark={false} d="M5 19L19 5M5 12L4 20L12 19M12 5L20 4L19 12M3 15L9 21M15 3L21 9" />距离<CornerMark /></MeasureButton>
              <MeasureButton><Stroke mark={false} d="M11 17L2 11L12 3L22 10L19 21H6M5 6L8 11M18 5L16 9M20 13L24 15M12 1V5" />周长<CornerMark /></MeasureButton>
              <MeasureButton><Stroke mark={false} d="M12 3L21 9L18 21H6L3 9ZM5 14L14 5M6 20L19 7M11 21L20 12M12 0V4M0 9H4M20 9H24M4 23L7 19M20 23L17 19" />面积<CornerMark /></MeasureButton>
            </Column>
          </Group>
          <Spacer />
          <Grips><Grip /></Grips>
        </Ribbon>

        <ModeBar>
          <ModeButton><Crown />独占模式</ModeButton>
          <ModeButton><Props />属性(P)...</ModeButton>
          <Spacer />
          <ModeGrips><Grip /><Grip /></ModeGrips>
        </ModeBar>

        <TabBar>
          <DocTab>
            旅游格言
            <button aria-label="关闭标签">
              <svg width="6" height="12" viewBox="0 0 6 12"><path d="M0.500 0.500L5.500 5.500M5.500 0.500L0.500 5.500" stroke="#333" /></svg>
            </button>
          </DocTab>
          <TabTool aria-label="新标签">
            <svg width="10" height="10" viewBox="0 0 10 10"><path d="M5 1V9M1 5H9" stroke="#fff" strokeWidth="2.800" /></svg>
          </TabTool>
          <Spacer />
          <TabTool aria-label="关闭文档">
            <svg width="10" height="10" viewBox="0 0 10 10"><path d="M1 1L9 9M9 1L1 9" stroke="#fff" strokeWidth="2.600" /></svg>
          </TabTool>
        </TabBar>

        <Workspace>
          <Panel>
            <PanelTitle>缩略图</PanelTitle>
            <PanelTools>
              <Tool label="选项" icon={<Gears />} arrow />
              <Bar />
              <ThumbZoom>
                <Tool label="放大缩略图" icon={<Round d="M12 6V18M6 12H18" />} />
                <Tool label="缩小缩略图" icon={<Round d="M6 12H18" />} />
              </ThumbZoom>
              <Bar />
              <Tool label="左转" icon={<Turn text />} />
              <Tool label="右转" icon={<Turn text />} />
            </PanelTools>
            <ThumbArea>
              <ThumbList>
                {[0, 1, 2].map((n) => (
                  <Thumb key={n} $on={n === 1}>
                    <Sheet><ThumbText n={n} /></Sheet>
                    <ThumbNumber>{n + 1}</ThumbNumber>
                  </Thumb>
                ))}
                <Watermark>
                  <svg width="44" height="46" viewBox="0 0 44 46" fill="#fff" stroke="#d8d8d8" strokeWidth="2" aria-hidden="true">
                    <path d="M6 32H3q-2 0-2-2V3q0-2 2-2H20q2 0 3 2M14 38H11q-2 0-2-2V9q0-2 2-2H28q2 0 3 2" />
                    <path d="M19 13H33L42 23V42q0 2-2 2H19q-2 0-2-2V15q0-2 2-2Z" />
                    <path d="M33 13L42 24L34 22Z" fill="#d8d8d8" />
                    <path d="M22 24H28M22 30H36M22 36H36" />
                  </svg>
                </Watermark>
              </ThumbList>
              <Scroll $w={15}>
                <ScrollButton $h={16} aria-label="向上"><Up /></ScrollButton>
                <ScrollGap $grow={1} />
                <ScrollButton $h={15} aria-label="向下"><Down /></ScrollButton>
              </Scroll>
            </ThumbArea>
          </Panel>

          <Viewer>
            <PageRow>
              <Page>
                <Quotes>
                  {quotes.map(([n, a, b]) => (
                    <Quote key={n}>
                      <QuoteNumber>{n}</QuoteNumber>
                      <span>{a}{b && <><br />{b}</>}</span>
                    </Quote>
                  ))}
                </Quotes>
              </Page>
              <Scroll $w={14}>
                <ScrollButton $h={15} aria-label="向上"><Up /></ScrollButton>
                <ScrollGap $grow={26} />
                <ScrollButton $h={29} aria-label="滚动块">
                  <svg width="6" height="6" viewBox="0 0 6 6"><path d="M0 .5H6M0 3H6M0 5.500H6" stroke="#888" /></svg>
                </ScrollButton>
                <ScrollGap $grow={73} />
                <ScrollButton $h={14} aria-label="向下"><Down /></ScrollButton>
              </Scroll>
            </PageRow>
            <StatusBar>
              <StatusCell $w={40}><Tool label="选项" icon={<Gears />} arrow /></StatusCell>
              <Bar />
              <StatusCell $w={91} $indent><Chevrons /></StatusCell>
              <StatusCell $w={28}><Tool label="首页" icon={<Round d="M8 7V17M15 7L10.500 12L15 17" />} /></StatusCell>
              <StatusCell $w={28}><Tool label="上一页" icon={<Round d="M14 7L9.500 12L14 17" />} /></StatusCell>
              <PageField aria-label="页码">
                <PageInput defaultValue="2" />
                <svg width="7" height="16" viewBox="0 0 7 16"><path d="M1 15L6 1" stroke="#666" /></svg>
                <PageTotal>5</PageTotal>
              </PageField>
              <StatusCell $w={28} $end><Tool label="下一页" icon={<Round d="M10 7L14.500 12L10 17" />} /></StatusCell>
              <StatusCell $w={33} $indent><Tool label="末页" icon={<Round d="M9 7L13.500 12L9 17M16 7V17" />} /></StatusCell>
              <Bar />
              <StatusCell $w={49} $indent><Tool label="后退" icon={<Round c={GREEN} d="M18 12H7M11 8L7 12L11 16" />} /><Chevrons /></StatusCell>
              <StatusCell $w={23}>
                <button aria-label="单页">
                  <svg width="17" height="22" viewBox="0 0 17 22" fill="none"><path d="M1 1H11L16 7V21H1Z" fill="#fff" stroke={GRAY} /><path d="M10 1L16 8L11 6Z" fill="#444" /></svg>
                </button>
              </StatusCell>
              <StatusCell $w={30}>
                <Toggle aria-label="连续">
                  <svg width="18" height="24" viewBox="0 0 18 24" fill="#fff" stroke={GRAY}><path d="M1 1V10H17V1M1 23V13H11L17 19V23" /><path d="M10 13L17 20L12 18Z" fill="#444" /></svg>
                </Toggle>
              </StatusCell>
              <StatusCell $w={41}>
                <button aria-label="双页">
                  <svg width="24" height="16" viewBox="0 0 24 16" fill="#fff" stroke={GRAY}><path d="M.5 1H7L10.500 5V15H.5ZM13.500 1H20L23.500 5V15H13.500Z" /><path d="M6.500 1L10.500 6L7.500 5ZM19.500 1L23.500 6L20.500 5Z" fill="#444" /></svg>
                </button>
                <Chevrons />
              </StatusCell>
              <StatusCell $w={86}><Combo w={82} label="显示比例" /></StatusCell>
              <Bar />
              <StatusCell $w={33} $indent><Tool label="缩小" icon={<Round d="M6 12H18" />} /></StatusCell>
              <Slider type="range" min="0" max="100" defaultValue="45" aria-label="缩放滑块" />
              <SliderEnd><Chevrons /><Chevrons /></SliderEnd>
              <StatusGrip><Grip /></StatusGrip>
            </StatusBar>
          </Viewer>
        </Workspace>
      </Frame>

      <Callout $x={142} $y={27} $w={107} $h={50} />
      <Callout $x={155} $y={237} $w={161} $h={40} />
      <Pointer width="310" height="182" viewBox="0 0 310 182" aria-hidden="true">
        <path d="M0 0L19 2L17 4L308 180L12 11L10 15Z" fill="#800080" />
      </Pointer>
    </Window>
  );
}
